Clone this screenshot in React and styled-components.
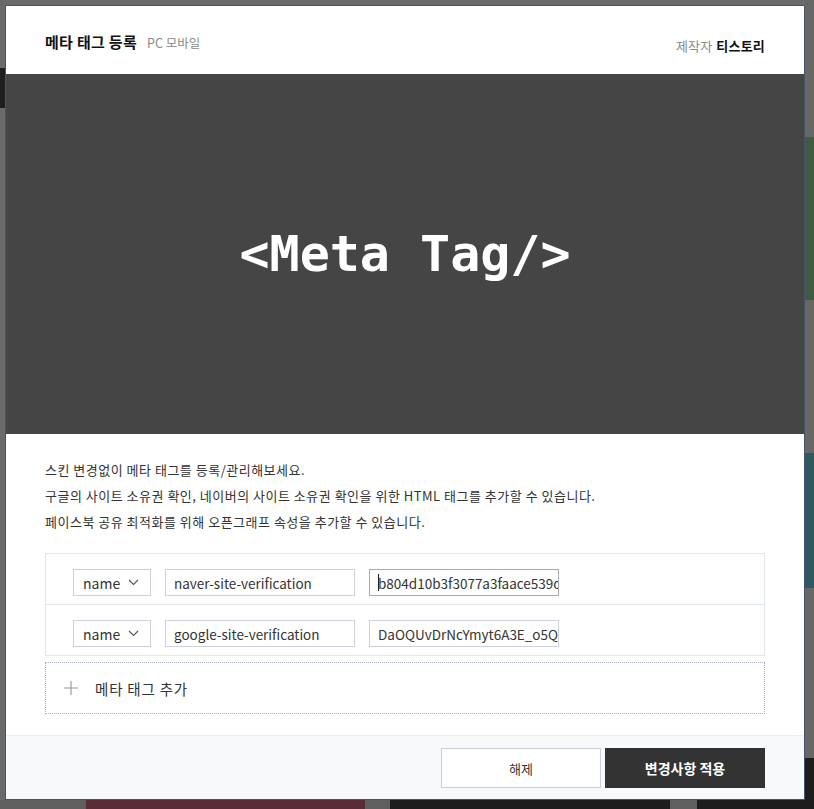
import React from "react";
import styled, { createGlobalStyle } from "styled-components";

const Global = createGlobalStyle`
  html, body { margin: 0; padding: 0; }
  body {
    width: 814px; height: 809px; overflow: hidden;
    background: #6a6a6a;
    font-family: "Noto Sans CJK KR", "Noto Sans", sans-serif;
  }
  * { box-sizing: border-box; }
`;

/* dimmed page behind the dialog */
const Page = styled.div`
  width: 814px; height: 809px;
  display: grid;
  grid-template-columns: 805px 9px;
  grid-template-rows: 800px 9px;
`;
const PageMain = styled.div`
  display: flex; flex-direction: column;
`;
const TopBar = styled.div`
  height: 68px; background: #6a6a6a;
`;
const DarkBand = styled.div`
  height: 40px; width: 5px; background: #1e1e1e;
`;
const Side = styled.div`
  display: flex; flex-direction: column; background: #676767;
`;
const SideBlock = styled.div`
  height: ${p => p.$h}px;
  flex: ${p => (p.$fill ? 1 : "none")};
  background: ${p => p.$bg || "transparent"};
`;
const Bottom = styled.div`
  display: flex; background: #5f5f5f;
`;
const BottomBlock = styled.div`
  width: ${p => p.$w}px; background: ${p => p.$bg};
`;
const Corner = styled.div`
  background: #1d1d1d;
`;

/* dialog */
const Dialog = styled.div`
  position: fixed; left: 5px; top: 5px;
  width: 800px; height: 795px;
  background: #fff;
  border: 1px solid #46536a;
  display: flex; flex-direction: column;
  overflow: hidden;
`;
const Header = styled.header`
  height: 68px; flex: none;
  padding: 0 39px 19px 39px;
  display: flex; align-items: flex-end; justify-content: space-between;
`;
const TitleGroup = styled.div`
  display: flex; align-items: baseline; gap: 10px;
  margin-bottom: 3px;
`;
const Title = styled.h1`
  margin: 0; font-size: 15px; font-weight: 700; color: #111;
  letter-spacing: 0.3px;
`;
const Sub = styled.span`
  font-size: 12.5px; color: #8a8a8a;
`;
const Maker = styled.div`
  font-size: 13px; color: #8a8a8a; letter-spacing: 0.2px;
  strong { color: #111; font-weight: 700; margin-left: 4px; }
`;
const Banner = styled.div`
  height: 360px; flex: none;
  background: #454545;
  display: flex; align-items: center; justify-content: center;
`;
const BannerText = styled.div`
  font-family: "DejaVu Sans Mono", "Liberation Mono", monospace;
  font-weight: 700; font-size: 50px; color: #fff;
`;
const Body = styled.div`
  padding: 23px 39px 0 39px;
  flex: 1;
`;
const Desc = styled.p`
  margin: 0; font-size: 13px; line-height: 26px; color: #333;
  letter-spacing: 0.5px;
`;
const Table = styled.div`
  margin-top: 18px;
  border: 1px solid #e1e5ec;
`;
const Row = styled.div`
  height: 50px;
  display: flex; align-items: center; gap: 14px;
  padding: 7px 0 0 27px;
  & + & { border-top: 1px solid #e1e5ec; height: 51px; }
`;
const Select = styled.div`
  width: 78px; height: 27px;
  border: 1px solid #ccd2dc;
  display: flex; align-items: center; justify-content: space-between;
  padding: 0 11px 0 9px;
  font-size: 14px; color: #333;
`;
const Input = styled.div`
  width: 190px; height: 27px;
  border: 1px solid ${p => (p.$focus ? "#a3acba" : "#ccd2dc")};
  display: flex; align-items: center;
  padding: 0 8px;
  font-size: 13.5px; color: #333;
  white-space: nowrap; overflow: hidden;
`;
const Caret = styled.span`
  width: 1px; height: 17px; background: #222; flex: none; margin-right: -1px;
`;
const AddRow = styled.div`
  margin-top: 6px;
  height: 52px;
  border: 1px dotted #a6aebb;
  display: flex; align-items: center; gap: 17px;
  padding-left: 18px;
  font-size: 14.5px; color: #333; letter-spacing: 0.8px;
`;
const Footer = styled.footer`
  height: 64px; flex: none;
  background: #f8f9fb;
  border-top: 1px solid #eceef2;
  display: flex; justify-content: flex-end; align-items: flex-start;
  gap: 4px;
  padding: 12px 39px 0 0;
`;
const Button = styled.button`
  width: 160px; height: 40px;
  font-family: inherit;
  font-size: ${p => (p.$primary ? "14px" : "13px")};
  font-weight: ${p => (p.$primary ? 700 : 400)};
  color: ${p => (p.$primary ? "#fff" : "#333")};
  background: ${p => (p.$primary ? "#333" : "#fff")};
  border: 1px solid ${p => (p.$primary ? "#333" : "#c9cfda")};
  padding: 0; cursor: pointer;
`;

const Chevron = () => (
  <svg width="11" height="7" viewBox="0 0 11 7" fill="none">
    <path d="M1 1l4.5 4.5L10 1" stroke="#555" strokeWidth="1.1" />
  </svg>
);
const Plus = () => (
  <svg width="14" height="14" viewBox="0 0 14 14">
    <path d="M7 0v14M0 7h14" stroke="#999" strokeWidth="1.2" />
  </svg>
);

export default function App() {
  return (
    <>
      <Global />
      <Page>
        <PageMain>
          <TopBar />
          <DarkBand />
        </PageMain>
        <Side>
          <SideBlock $h={137} />
          <SideBlock $h={163} $bg="#405a46" />
          <SideBlock $h={153} />
          <SideBlock $h={135} $bg="#2f5860" />
          <SideBlock $h={170} />
          <SideBlock $fill $bg="#1d1d1d" />
        </Side>
        <Bottom>
          <BottomBlock $w={86} $bg="#5f5f5f" />
          <BottomBlock $w={279} $bg="#5a2c36" />
          <BottomBlock $w={25} $bg="#5f5f5f" />
          <BottomBlock $w={280} $bg="#1d1d1d" />
          <BottomBlock $w={27} $bg="#5f5f5f" />
          <BottomBlock $w={108} $bg="#1d1d1d" />
        </Bottom>
        <Corner />
      </Page>
      <Dialog>
        <Header>
          <TitleGroup>
            <Title>메타 태그 등록</Title>
            <Sub>PC 모바일</Sub>
          </TitleGroup>
          <Maker>
            제작자<strong>티스토리</strong>
          </Maker>
        </Header>
        <Banner>
          <BannerText>&lt;Meta Tag/&gt;</BannerText>
        </Banner>
        <Body>
          <Desc>스킨 변경없이 메타 태그를 등록/관리해보세요.</Desc>
          <Desc>구글의 사이트 소유권 확인, 네이버의 사이트 소유권 확인을 위한 HTML 태그를 추가할 수 있습니다.</Desc>
          <Desc>페이스북 공유 최적화를 위해 오픈그래프 속성을 추가할 수 있습니다.</Desc>
          <Table>
            <Row>
              <Select>name<Chevron /></Select>
              <Input>naver-site-verification</Input>
              <Input $focus><Caret />b804d10b3f3077a3faace539d7</Input>
            </Row>
            <Row>
              <Select>name<Chevron /></Select>
              <Input>google-site-verification</Input>
              <Input>DaOQUvDrNcYmyt6A3E_o5Qx</Input>
            </Row>
          </Table>
          <AddRow>
            <Plus />
            메타 태그 추가
          </AddRow>
        </Body>
        <Footer>
          <Button>해제</Button>
          <Button $primary>변경사항 적용</Button>
        </Footer>
      </Dialog>
    </>
  );
}
